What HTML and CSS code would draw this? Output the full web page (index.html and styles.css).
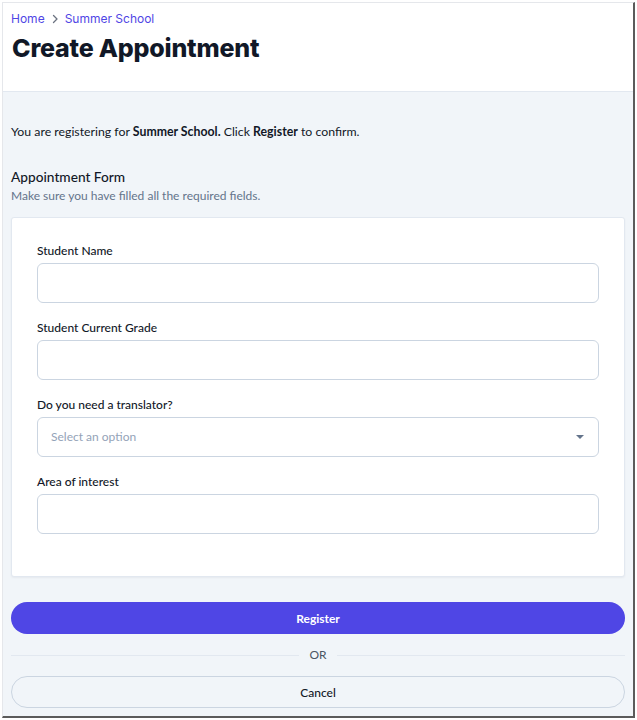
FILE: index.html
```html
<!DOCTYPE html>
<html lang="en">
<head>
<meta charset="utf-8">
<title>Create Appointment</title>
<link rel="stylesheet" href="styles.css">
</head>
<body>
<div class="frame">
  <header class="page-header">
    <nav class="breadcrumb">
      <a href="#">Home</a>
      <svg class="chev" width="10" height="12" viewBox="0 0 10 12" aria-hidden="true"><path d="M3.5 2.5 7 6l-3.5 3.5" fill="none" stroke="#6b7280" stroke-width="1.3" stroke-linecap="round" stroke-linejoin="round"/></svg>
      <a href="#">Summer School</a>
    </nav>
    <h1 class="title">Create Appointment</h1>
  </header>
  <main class="content">
    <p class="intro">You are registering for <b>Summer School.</b> Click <b>Register</b> to confirm.</p>
    <h2 class="form-title">Appointment Form</h2>
    <p class="form-sub">Make sure you have filled all the required fields.</p>
    <form class="card">
      <div class="field">
        <label>Student Name</label>
        <div class="input"></div>
      </div>
      <div class="field">
        <label>Student Current Grade</label>
        <div class="input"></div>
      </div>
      <div class="field">
        <label>Do you need a translator?</label>
        <div class="input select">
          <span class="placeholder">Select an option</span>
          <svg class="caret" width="10" height="6" viewBox="0 0 10 6" aria-hidden="true"><path d="M1 1h8L5 5z" fill="#64748b"/></svg>
        </div>
      </div>
      <div class="field">
        <label>Area of interest</label>
        <div class="input"></div>
      </div>
    </form>
    <button class="btn primary" type="button">Register</button>
    <div class="divider"><span>OR</span></div>
    <button class="btn ghost" type="button">Cancel</button>
  </main>
</div>
</body>
</html>
```

FILE: styles.css
```css
* { box-sizing: border-box; }
html, body { margin: 0; padding: 0; background: #ffffff; }
body {
  font-family: "Lato", "Inter", sans-serif;
  color: #111827;
}
.frame {
  margin: 2px 0 0 2px;
  width: 633px;
  height: 716px;
  border-top: 1px solid #e5e7eb;
  border-left: 1px solid #e5e7eb;
  border-right: 2px solid #5b5b5b;
  border-bottom: 2px solid #5b5b5b;
  background: #f1f5f9;
  overflow: hidden;
}
.page-header {
  background: #ffffff;
  border-bottom: 1px solid #e2e8f0;
  padding: 8px 8px 0 8px;
  height: 89px;
}
.breadcrumb {
  display: flex;
  align-items: center;
  gap: 5px;
  font-family: "Inter", sans-serif;
  font-size: 12px;
  line-height: 16px;
}
.breadcrumb a { color: #5046e5; text-decoration: none; }
.title {
  margin: 5px 0 0 1px;
  font-family: "Inter", sans-serif;
  font-weight: 800;
  font-size: 25px;
  line-height: 32px;
  letter-spacing: -0.2px;
  color: #111827;
}
.content { padding: 32px 8px 0 8px; }
.intro {
  margin: 0;
  font-size: 12.3px;
  line-height: 16px;
  color: #111827;
}
.intro b { font-weight: 700; }
.form-title {
  margin: 27px 0 0 0;
  font-size: 13.7px;
  line-height: 20px;
  font-weight: 500;
  color: #111827;
}
.form-sub {
  margin: 1px 0 0 0;
  font-size: 12px;
  line-height: 16px;
  color: #64748b;
}
.card {
  margin: 13px 0 0 0;
  background: #ffffff;
  border: 1px solid #e2e8f0;
  border-radius: 3px;
  box-shadow: 0 1px 2px rgba(15, 23, 42, 0.05);
  padding: 25px 25px 42px 25px;
  display: flex;
  flex-direction: column;
  gap: 17px;
}
.field { display: flex; flex-direction: column; gap: 4px; }
.field label {
  font-size: 12px;
  line-height: 16px;
  font-weight: 500;
  color: #111827;
}
.input {
  height: 40px;
  border: 1px solid #cbd5e1;
  border-radius: 6px;
  background: #ffffff;
}
.select {
  display: flex;
  align-items: center;
  justify-content: space-between;
  padding: 0 13px 1px 13px;
}
.placeholder { font-size: 12px; color: #94a3b8; }
.caret { margin-top: 1px; }
.btn {
  display: block;
  width: 100%;
  height: 32px;
  border-radius: 999px;
  font-family: "Lato", "Inter", sans-serif;
  font-size: 12px;
  font-weight: 500;
  cursor: pointer;
}
.primary {
  margin-top: 25px;
  background: #4f46e5;
  border: none;
  color: #ffffff;
  font-weight: 700;
}
.divider {
  margin: 13px 0 13px 0;
  display: flex;
  align-items: center;
  gap: 10px;
  font-size: 12px;
  line-height: 16px;
  color: #4b5563;
}
.divider::before, .divider::after {
  content: "";
  flex: 1;
  height: 1px;
  background: #e2e8f0;
}
.ghost {
  background: transparent;
  border: 1px solid #cbd5e1;
  color: #111827;
}
```
